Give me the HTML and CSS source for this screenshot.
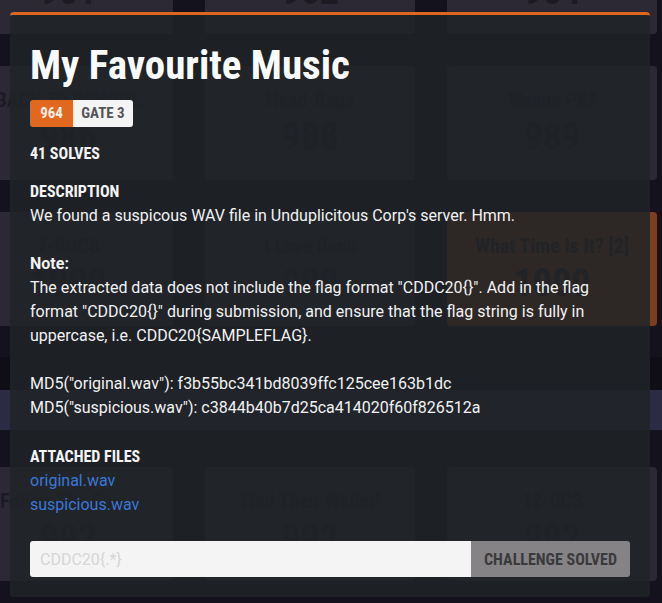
FILE: index.html
```html
<!DOCTYPE html>
<html lang="en">
<head>
<meta charset="utf-8">
<title>My Favourite Music</title>
<link rel="stylesheet" href="styles.css">
</head>
<body>
<div class="board">
  <div class="row">
    <div class="card"><div class="card-title">Crypto 1</div><div class="card-pts">961</div></div>
    <div class="card"><div class="card-title">Crypto 2</div><div class="card-pts">962</div></div>
    <div class="card"><div class="card-title">Crypto 3</div><div class="card-pts">964</div></div>
  </div>
  <div class="row">
    <div class="card"><div class="card-title">BACK TO SCHOOL</div><div class="card-pts">986</div></div>
    <div class="card"><div class="card-title">Head-Rags</div><div class="card-pts">988</div></div>
    <div class="card"><div class="card-title">Wanna PK?</div><div class="card-pts">989</div></div>
  </div>
  <div class="row row-last">
    <div class="card"><div class="card-title">7-DOCS</div><div class="card-pts">1000</div></div>
    <div class="card"><div class="card-title">I Love Bach</div><div class="card-pts">999</div></div>
    <div class="card solved"><div class="card-title">What Time Is It? [2]</div><div class="card-pts">1000</div></div>
  </div>
  <div class="section-end"></div>
  <div class="section-head"></div>
  <div class="section-space"></div>
  <div class="row">
    <div class="card"><div class="card-title">Follow The Coins</div><div class="card-pts">992</div></div>
    <div class="card"><div class="card-title">Find Their Wallet!</div><div class="card-pts">992</div></div>
    <div class="card"><div class="card-title">12-DCS</div><div class="card-pts">992</div></div>
  </div>
</div>

<div class="modal">
  <h1 class="title">My Favourite Music</h1>
  <div class="badge"><span class="badge-pts">964</span><span class="badge-cat">GATE 3</span></div>
  <div class="label solves">41 SOLVES</div>
  <div class="label">DESCRIPTION</div>
  <div class="desc">
    <p>We found a suspicous WAV file in Unduplicitous Corp's server. Hmm.</p>
    <p class="gap"><b>Note:</b><br>The extracted data does not include the flag format "CDDC20{}". Add in the flag format "CDDC20{}" during submission, and ensure that the flag string is fully in uppercase, i.e. CDDC20{SAMPLEFLAG}.</p>
    <p class="gap">MD5("original.wav"): f3b55bc341bd8039ffc125cee163b1dc<br>MD5("suspicious.wav"): c3844b40b7d25ca414020f60f826512a</p>
  </div>
  <div class="label files">ATTACHED FILES</div>
  <div class="file-list">
    <a class="file" href="#">original.wav</a>
    <a class="file" href="#">suspicious.wav</a>
  </div>
  <form class="submit">
    <input class="flag-input" type="text" placeholder="CDDC20{.*}">
    <button class="solved-btn" type="button">CHALLENGE SOLVED</button>
  </form>
</div>
</body>
</html>
```
FILE: styles.css
```css
html, body {
  margin: 0;
  padding: 0;
}
body {
  width: 662px;
  height: 603px;
  overflow: hidden;
  background: #14131d;
  font-family: Roboto, "Liberation Sans", sans-serif;
  position: relative;
}

/* background board */
.board {
  display: flex;
  flex-direction: column;
  margin-left: -37px;
  margin-top: -80px;
}
.row {
  display: flex;
  gap: 32px;
  margin-bottom: 32px;
}
.row-last { margin-bottom: 0; }
.card {
  flex: 0 0 210px;
  height: 114px;
  background: #2c2935;
  border-radius: 4px;
  display: flex;
  flex-direction: column;
  align-items: center;
  color: #1c1a23;
  font-family: Roboto, sans-serif;
  font-stretch: 75%;
  font-weight: bold;
}
.card.solved { background: #7e3d1e; color: #2a1e1c; }
.card-title {
  margin-top: 23px;
  font-size: 20px;
  line-height: 22px;
}
.card-pts {
  margin-top: 6px;
  font-size: 38px;
  line-height: 40px;
}
.section-end { height: 31px; }
.section-head { height: 33px; background: #0f0e17; }
.section-space { height: 40px; background: #2b2c43; margin-bottom: 37px; }

/* modal */
.modal {
  position: absolute;
  left: 10px;
  top: 12px;
  width: 640px;
  height: 585px;
  box-sizing: border-box;
  border-top: 3px solid #e0661e;
  border-radius: 4px;
  background: rgba(31, 36, 40, 0.86);
  padding: 26px 20px 20px;
  color: #ffffff;
  display: flex;
  flex-direction: column;
  align-items: flex-start;
}
.title {
  margin: 0;
  font-family: Roboto, sans-serif;
  font-stretch: 75%;
  font-weight: bold;
  font-size: 41px;
  line-height: 48px;
  color: #fbfbfb;
}
.badge {
  margin-top: 11px;
  display: flex;
  height: 27px;
  border-radius: 3px;
  overflow: hidden;
  font-family: Roboto, sans-serif;
  font-stretch: 75%;
  font-weight: bold;
  font-size: 15px;
  line-height: 27px;
}
.badge-pts {
  background: #e0681f;
  color: #fbeee6;
  width: 43px;
  text-align: center;
}
.badge-cat {
  background: #f4f4f4;
  color: #555459;
  width: 60px;
  text-align: center;
}
.label {
  font-family: Roboto, sans-serif;
  font-stretch: 75%;
  font-weight: bold;
  font-size: 16px;
  line-height: 24px;
  color: #f4f4f4;
  margin-top: 14px;
}
.solves { margin-top: 15px; }
.files { margin-top: 25px; }
.desc {
  font-size: 16px;
  line-height: 24px;
  color: #f2f2f2;
}
.desc p { margin: 0; }
.desc p.gap { margin-top: 24px; }
.desc b { font-weight: bold; }
.file-list {
  display: flex;
  flex-direction: column;
}
.file {
  font-size: 16px;
  line-height: 24px;
  color: #3b78d8;
  text-decoration: none;
}
.submit {
  margin: 24px 0 0;
  display: flex;
  width: 600px;
  height: 36px;
  border-radius: 3px;
  overflow: hidden;
}
.flag-input {
  flex: 1;
  border: 0;
  margin: 0;
  padding: 0 10px;
  background: #f4f4f4;
  font-family: Roboto, sans-serif;
  font-size: 16px;
  color: #333;
  outline: none;
}
.flag-input::placeholder { color: #d6d6d6; }
.solved-btn {
  flex: 0 0 159px;
  border: 0;
  margin: 0;
  padding: 0;
  background: #858385;
  color: #3a393c;
  font-family: Roboto, sans-serif;
  font-stretch: 75%;
  font-weight: bold;
  font-size: 16px;
}
```
